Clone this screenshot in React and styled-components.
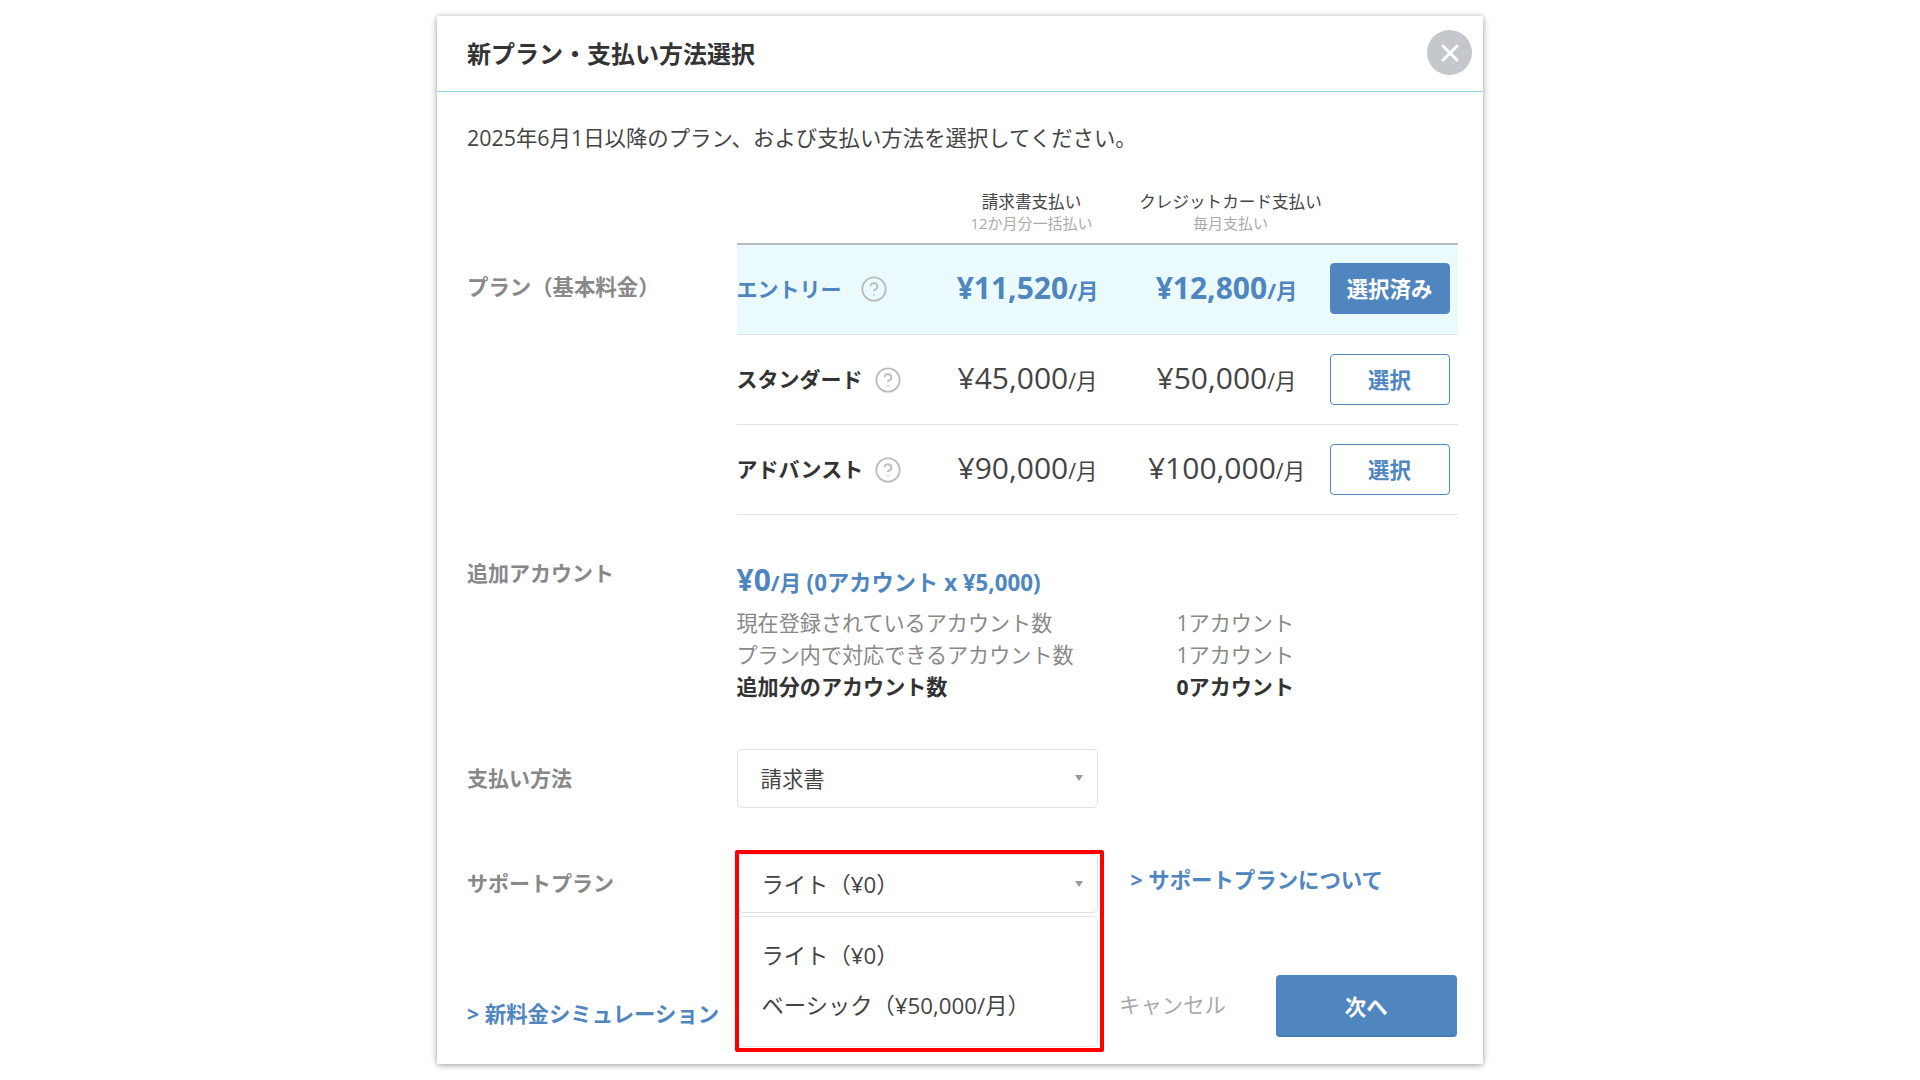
import styled, { createGlobalStyle } from "styled-components";
import { CircleHelp, X } from "lucide-react";

const GlobalStyle = createGlobalStyle`
  html, body {
    margin: 0;
    background: #fff;
  }
  body {
    font-family: "Open Sans", "Noto Sans CJK JP", sans-serif;
    font-size: 21.4px;
    color: #444;
  }
  * {
    box-sizing: border-box;
  }
`;

const Page = styled.div`
  width: 1920px;
  height: 1080px;
  padding: 16px 437px 0;
  overflow: hidden;
`;

const Modal = styled.div`
  width: 1046px;
  height: 1048px;
  background: #fff;
  border-radius: 2px;
  box-shadow: 0 1px 6px rgba(0, 0, 0, 0.4);
`;

const Header = styled.div`
  height: 76px;
  padding: 0 11px 2px 30px;
  display: flex;
  align-items: center;
  justify-content: space-between;
  border-bottom: 1px solid #8ed8e8;
`;

const Title = styled.div`
  font-size: 24px;
  font-weight: 700;
  color: #333;
`;

const CloseButton = styled.div`
  width: 45px;
  height: 45px;
  border-radius: 50%;
  background: #c4c7cb;
  color: #fff;
  display: flex;
  align-items: center;
  justify-content: center;
`;

const Body = styled.div`
  padding: 31px 26.5px 0 30px;
`;

const Intro = styled.div`
  line-height: 30px;
  color: #444;
`;

const FormRow = styled.div`
  display: grid;
  grid-template-columns: 269.5px 1fr;
  margin-top: ${(p) => p.$top || 0}px;
`;

const Label = styled.div`
  font-size: ${(p) => p.$size || 21}px;
  font-weight: 700;
  color: #888;
  line-height: 32px;
  margin-top: ${(p) => p.$top || 0}px;
`;

const ColumnHeads = styled.div`
  margin: 38px 0 0 269.5px;
  padding-bottom: 9px;
  display: grid;
  grid-template-columns: 195px 200px 198px 128px;
  text-align: center;
`;

const ColumnHead = styled.div`
  grid-column: ${(p) => p.$col};
  font-size: 16.6px;
  line-height: 22px;
  color: #444;
  white-space: nowrap;
`;

const ColumnSub = styled.div`
  font-size: 15px;
  margin-top: -1px;
  color: #aaa;
`;

const PlanTable = styled.div`
  border-top: 2px solid #b9bcbd;
`;

const PlanRow = styled.div`
  height: 90px;
  padding-bottom: ${(p) => (p.$active ? 2 : 0)}px;
  display: grid;
  grid-template-columns: 195px 200px 198px 120px 8px;
  align-items: center;
  background: ${(p) => (p.$active ? "#ebfafc" : "transparent")};
  border-bottom: 1px solid #dfe2e3;
`;

const PlanName = styled.div`
  display: flex;
  align-items: center;
  gap: ${(p) => p.$gap}px;
  font-size: 21px;
  font-weight: 700;
  color: ${(p) => (p.$active ? "#4f86bf" : "#333")};
  white-space: nowrap;

  svg {
    color: #bcbcbc;
    margin-top: 1px;
  }
`;

const NameText = styled.span`
  margin-top: ${(p) => (p.$active ? -2 : -4)}px;
`;

const Price = styled.div`
  padding: 0 8px ${(p) => (p.$active ? 3 : 5)}px 0;
  text-align: center;
  white-space: nowrap;
  color: ${(p) => (p.$active ? "#4f86bf" : "#444")};
  font-weight: ${(p) => (p.$active ? 700 : 400)};
`;

const Amount = styled.span`
  font-size: 30px;
`;

const SelectButton = styled.div`
  height: 51px;
  padding-bottom: 2px;
  border: 1px solid #4f86bf;
  border-radius: 4px;
  background: ${(p) => (p.$active ? "#4f86bf" : "#fff")};
  color: ${(p) => (p.$active ? "#fff" : "#4f86bf")};
  font-weight: 700;
  display: flex;
  align-items: center;
  justify-content: center;
`;

const AccountTotal = styled.div`
  padding-top: 1px;
  line-height: 32px;
  font-weight: 700;
  color: #4f86bf;
`;

const AccountDetail = styled.span`
  font-size: 22.3px;
`;

const AccountLines = styled.div`
  margin-top: 8px;
`;

const AccountLine = styled.div`
  display: grid;
  grid-template-columns: 440px 1fr;
  font-size: 21.1px;
  line-height: 32px;
  color: ${(p) => (p.$strong ? "#333" : "#888")};
  font-weight: ${(p) => (p.$strong ? 700 : 400)};
`;

const SelectBox = styled.div`
  position: relative;
  width: ${(p) => p.$width}px;
  margin-left: ${(p) => p.$left || 0}px;
  height: 59px;
  padding: ${(p) => p.$lower || 0}px 22px 2px 23px;
  border: 1px solid #dfe1e2;
  border-radius: 5px;
  background: #fff;
  display: flex;
  align-items: center;
  justify-content: space-between;
  color: #444;
  font-size: ${(p) => p.$size || 21.4}px;

  &::after {
    content: "";
    margin-right: -8px;
    border-left: 4px solid transparent;
    border-right: 4px solid transparent;
    border-top: 6px solid #999;
  }
`;

const SupportCell = styled.div`
  display: flex;
  align-items: flex-start;
`;

const SupportSelect = styled.div`
  position: relative;
`;

const Menu = styled.div`
  position: absolute;
  z-index: 2;
  top: 62px;
  left: 1px;
  width: 360px;
  height: 131px;
  padding: 19px 23px;
  background: #fff;
  border: 1px solid #e4e6e7;
  border-radius: 5px;
  font-size: 22.3px;
`;

const MenuItem = styled.div`
  height: 50px;
  line-height: 40px;
  color: #444;
  white-space: nowrap;
`;

const Highlight = styled.div`
  position: absolute;
  z-index: 3;
  top: -4px;
  left: -2px;
  width: 369px;
  height: 202px;
  border: 4px solid #f00;
  border-radius: 2px;
  pointer-events: none;
`;

const TextLink = styled.div`
  font-weight: 700;
  color: #4f86bf;
  white-space: nowrap;
`;

const SupportLink = styled(TextLink)`
  margin: 9px 0 0 33px;
`;

const Footer = styled.div`
  margin-top: 62px;
  display: flex;
  align-items: flex-start;
`;

const SimulationLink = styled(TextLink)`
  margin-top: 22px;
  width: 652px;
`;

const Cancel = styled.div`
  margin-top: 13px;
  width: 157px;
  color: #aaa;
  white-space: nowrap;
`;

const NextButton = styled.div`
  width: 180.5px;
  height: 62px;
  padding-bottom: 2px;
  border-radius: 4px;
  background: #4f86bf;
  box-shadow: inset 0 -2px 0 rgba(0, 0, 0, 0.08);
  color: #fff;
  font-weight: 700;
  display: flex;
  align-items: center;
  justify-content: center;
`;

const plans = [
  { name: "エントリー", gap: 18, invoice: "¥11,520", card: "¥12,800", active: true },
  { name: "スタンダード", gap: 11, invoice: "¥45,000", card: "¥50,000" },
  { name: "アドバンスト", gap: 11, invoice: "¥90,000", card: "¥100,000" },
];

const App = () => {
  return (
    <Page>
      <GlobalStyle />
      <Modal>
        <Header>
          <Title>新プラン・支払い方法選択</Title>
          <CloseButton>
            <X size={28} strokeWidth={2.5} />
          </CloseButton>
        </Header>
        <Body>
          <Intro>2025年6月1日以降のプラン、および支払い方法を選択してください。</Intro>

          <ColumnHeads>
            <ColumnHead $col={2}>
              請求書支払い
              <ColumnSub>12か月分一括払い</ColumnSub>
            </ColumnHead>
            <ColumnHead $col={3}>
              クレジットカード支払い
              <ColumnSub>毎月支払い</ColumnSub>
            </ColumnHead>
          </ColumnHeads>

          <FormRow>
            <Label $top={28} $size={21.4}>プラン（基本料金）</Label>
            <PlanTable>
              {plans.map((plan) => (
                <PlanRow key={plan.name} $active={plan.active}>
                  <PlanName $active={plan.active} $gap={plan.gap}>
                    <NameText $active={plan.active}>{plan.name}</NameText>
                    <CircleHelp size={28} strokeWidth={1.6} />
                  </PlanName>
                  <Price $active={plan.active}>
                    <Amount>{plan.invoice}</Amount>/月
                  </Price>
                  <Price $active={plan.active}>
                    <Amount>{plan.card}</Amount>/月
                  </Price>
                  <SelectButton $active={plan.active}>
                    {plan.active ? "選択済み" : "選択"}
                  </SelectButton>
                </PlanRow>
              ))}
            </PlanTable>
          </FormRow>

          <FormRow $top={48}>
            <Label $top={-6}>追加アカウント</Label>
            <div>
              <AccountTotal>
                <Amount>¥0</Amount>/月 <AccountDetail>(0アカウント x ¥5,000)</AccountDetail>
              </AccountTotal>
              <AccountLines>
                <AccountLine>
                  <span>現在登録されているアカウント数</span>
                  <span>1アカウント</span>
                </AccountLine>
                <AccountLine>
                  <span>プラン内で対応できるアカウント数</span>
                  <span>1アカウント</span>
                </AccountLine>
                <AccountLine $strong>
                  <span>追加分のアカウント数</span>
                  <span>0アカウント</span>
                </AccountLine>
              </AccountLines>
            </div>
          </FormRow>

          <FormRow $top={46}>
            <Label $top={13}>支払い方法</Label>
            <SelectBox $width={361}>請求書</SelectBox>
          </FormRow>

          <FormRow $top={46}>
            <Label $top={13}>サポートプラン</Label>
            <SupportCell>
              <SupportSelect>
                <SelectBox $width={360} $left={1} $size={22.3} $lower={2}>ライト（¥0）</SelectBox>
                <Menu>
                  <MenuItem>ライト（¥0）</MenuItem>
                  <MenuItem>ベーシック（¥50,000/月）</MenuItem>
                </Menu>
                <Highlight />
              </SupportSelect>
              <SupportLink>&gt; サポートプランについて</SupportLink>
            </SupportCell>
          </FormRow>

          <Footer>
            <SimulationLink>&gt; 新料金シミュレーション</SimulationLink>
            <Cancel>キャンセル</Cancel>
            <NextButton>次へ</NextButton>
          </Footer>
        </Body>
      </Modal>
    </Page>
  );
};

export default App;
